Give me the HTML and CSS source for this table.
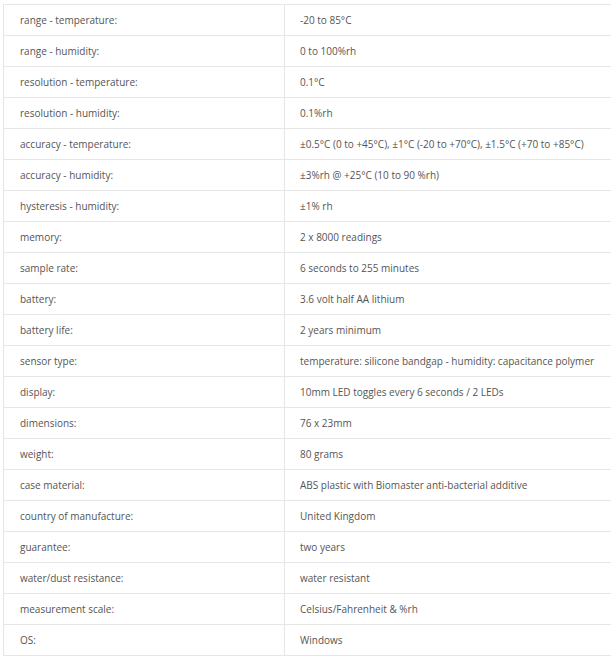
FILE: index.html
```html
<!DOCTYPE html>
<html lang="en">
<head>
    <meta charset="UTF-8">
    <title>Specification</title>
    <link rel="stylesheet" href="styles.css">
</head>
<body>
<table class="spec-table">
    <tr><td>range - temperature:</td><td>-20 to 85°C</td></tr>
    <tr><td>range - humidity:</td><td>0 to 100%rh</td></tr>
    <tr><td>resolution - temperature:</td><td>0.1°C</td></tr>
    <tr><td>resolution - humidity:</td><td>0.1%rh</td></tr>
    <tr><td>accuracy - temperature:</td><td>±0.5°C (0 to +45°C), ±1°C (-20 to +70°C), ±1.5°C (+70 to +85°C)</td></tr>
    <tr><td>accuracy - humidity:</td><td>±3%rh @ +25°C (10 to 90 %rh)</td></tr>
    <tr><td>hysteresis - humidity:</td><td>±1% rh</td></tr>
    <tr><td>memory:</td><td>2 x 8000 readings</td></tr>
    <tr><td>sample rate:</td><td>6 seconds to 255 minutes</td></tr>
    <tr><td>battery:</td><td>3.6 volt half AA lithium</td></tr>
    <tr><td>battery life:</td><td>2 years minimum</td></tr>
    <tr><td>sensor type:</td><td>temperature: silicone bandgap - humidity: capacitance polymer</td></tr>
    <tr><td>display:</td><td>10mm LED toggles every 6 seconds / 2 LEDs</td></tr>
    <tr><td>dimensions:</td><td>76 x 23mm</td></tr>
    <tr><td>weight:</td><td>80 grams</td></tr>
    <tr><td>case material:</td><td>ABS plastic with Biomaster anti-bacterial additive</td></tr>
    <tr><td>country of manufacture:</td><td>United Kingdom</td></tr>
    <tr><td>guarantee:</td><td>two years</td></tr>
    <tr><td>water/dust resistance:</td><td>water resistant</td></tr>
    <tr><td>measurement scale:</td><td>Celsius/Fahrenheit &amp; %rh</td></tr>
    <tr><td>OS:</td><td>Windows</td></tr>
</table>
</body>
</html>
```

FILE: styles.css
```css
body {
    margin: 4px 0 0 3px;
    background-color: #fff;
    font-family: "Open Sans", Arial, sans-serif;
    overflow: hidden;
}

.spec-table {
    width: 100%;
    border-collapse: collapse;
    font-size: 10px;
    color: #555;
}

.spec-table td {
    height: 30px;
    padding: 0 15px;
    border: 1px solid #e6e6e6;
    border-right: none;
    white-space: nowrap;
    vertical-align: middle;
}

.spec-table td:first-child {
    width: 249px;
    padding-left: 16px;
    border-right: 1px solid #e6e6e6;
}
```
